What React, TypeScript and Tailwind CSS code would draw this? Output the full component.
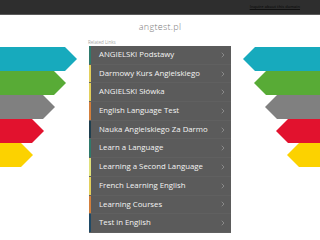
import { ChevronRight } from "lucide-react";

const links = [
  { label: "ANGIELSKI Podstawy", bar: "bg-[#2f7a6c]" },
  { label: "Darmowy Kurs Angielskiego", bar: "bg-[#e3cf5b]" },
  { label: "ANGIELSKI Słówka", bar: "bg-[#e3cf5b]" },
  { label: "English Language Test", bar: "bg-[#d27f3c]" },
  { label: "Nauka Angielskiego Za Darmo", bar: "bg-[#1e3f4f]" },
  { label: "Learn a Language", bar: "bg-[#2f7a6c]" },
  { label: "Learning a Second Language", bar: "bg-[#dfe07a]" },
  { label: "French Learning English", bar: "bg-[#e3cf5b]" },
  { label: "Learning Courses", bar: "bg-[#d27f3c]" },
  { label: "Test in English", bar: "bg-[#1f4a66]" },
];

const arrows = [
  { color: "#17aabd", depth: 0 },
  { color: "#58ab36", depth: 1 },
  { color: "#808080", depth: 2 },
  { color: "#e2122e", depth: 3 },
  { color: "#fcd200", depth: 4 },
];

// arrow bands drawn as one svg per side
const Arrows = ({ side }: { side: "left" | "right" }) => (
  <svg width="80" height="122" viewBox="0 0 80 122" className="block">
    {arrows.map((a, i) => {
      const top = i * 24;
      const bottom = top + 24;
      const mid = top + 12;
      const tip = 77 - a.depth * 11;
      const shoulder = tip - 12;
      const pts =
        side === "left"
          ? `0,${top} ${shoulder},${top} ${tip},${mid} ${shoulder},${bottom} 0,${bottom}`
          : `80,${top} ${80 - shoulder},${top} ${80 - tip},${mid} ${80 - shoulder},${bottom} 80,${bottom}`;
      return <polygon key={a.color} points={pts} fill={a.color} />;
    })}
  </svg>
);

export default function App() {
  return (
    <div className="w-[320px] h-[240px] bg-white overflow-hidden font-['Open_Sans',sans-serif]">
      {/* Top bar */}
      <div className="h-[15px] bg-[#2e2e2e] border-b border-[#5a5a5a] flex items-center justify-end pr-[20px]">
        <a className="text-[4px] text-[#111] underline font-semibold">Inquire about this domain</a>
      </div>

      <div className="h-[24px] flex items-center justify-center">
        <span className="text-[9px] text-[#7a7a7a] font-light tracking-[0.3px]">angtest.pl</span>
      </div>

      <div className="grid grid-cols-[80px_1fr_80px] gap-[9px]">
        <div className="pt-[8px]">
          <Arrows side="left" />
        </div>

        <div>
          <div className="text-[4.5px] text-[#a8a8a8] h-[7px] leading-[7px] -ml-[1px]">Related Links</div>
          <ul className="w-[142px]">
            {links.map((l) => (
              <li key={l.label} className="h-[18.7px] bg-[#5b5b5b] flex items-center border-b border-[#606060]">
                <span className={`w-[2px] self-stretch ${l.bar}`} />
                <span className="flex-1 pl-[8px] text-[7.8px] text-[#f4f4f4] whitespace-nowrap">{l.label}</span>
                <ChevronRight size={8} strokeWidth={1.3} className="text-[#c8c8c8] mr-[4px]" />
              </li>
            ))}
          </ul>
        </div>

        <div className="pt-[8px]">
          <Arrows side="right" />
        </div>
      </div>
    </div>
  );
}
